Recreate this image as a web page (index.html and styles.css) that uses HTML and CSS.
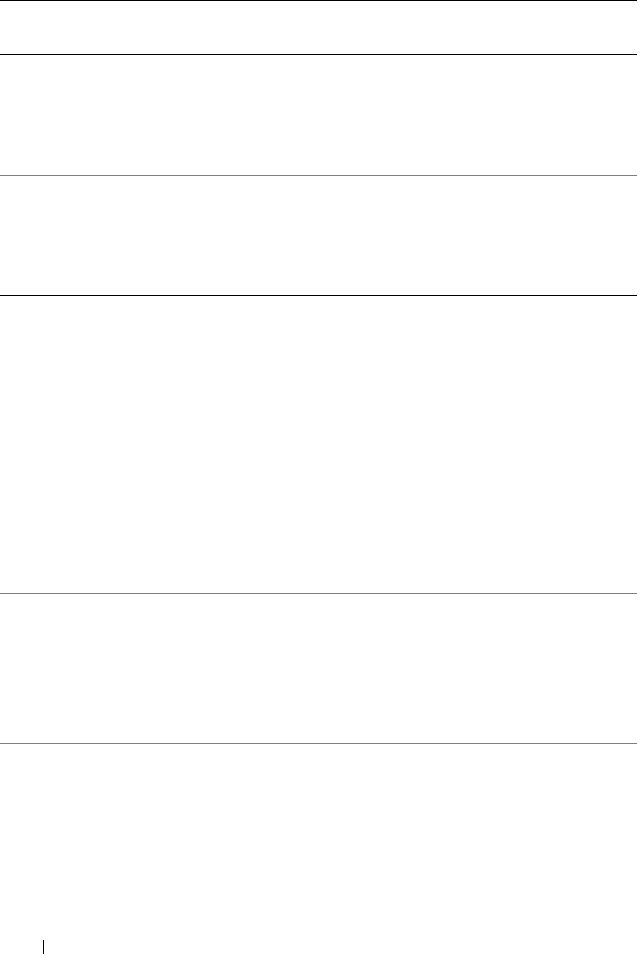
FILE: index.html
```html
<!DOCTYPE html>
<html lang="en">
<head>
  <meta charset="UTF-8">
  <title>Page</title>
  <link rel="stylesheet" href="styles.css">
</head>
<body>
  <div class="sheet">
    <div class="row head"></div>
    <div class="row r1"></div>
    <div class="row r2 strong"></div>
    <div class="row r3"></div>
    <div class="row r4"></div>
    <div class="row r5 last"></div>
  </div>
  <footer class="folio"><span class="mark"></span></footer>
</body>
</html>
```

FILE: styles.css
```css
:root {
  --rule-dark: #000;
  --rule-light: #808080;
}
* { box-sizing: border-box; }
body {
  margin: 0;
  background: #fff;
  font-family: "Liberation Serif", serif;
  height: 954px;
  overflow: hidden;
}
.sheet {
  width: 637px;
  border-top: 1px solid var(--rule-dark);
}
.row {
  border-bottom: 1px solid var(--rule-light);
}
.head {
  height: 54px;
  border-bottom: 1px solid var(--rule-dark);
}
.r1 { height: 121px; }
.r2 { height: 120px; }
.strong { border-bottom-color: var(--rule-dark); }
.r3 { height: 298px; }
.r4 { height: 150px; }
.last { height: 196px; border-bottom: none; }
.folio {
  padding-left: 43px;
  height: 15px;
}
.mark {
  display: block;
  width: 1px;
  height: 15px;
  background: var(--rule-dark);
}
```
